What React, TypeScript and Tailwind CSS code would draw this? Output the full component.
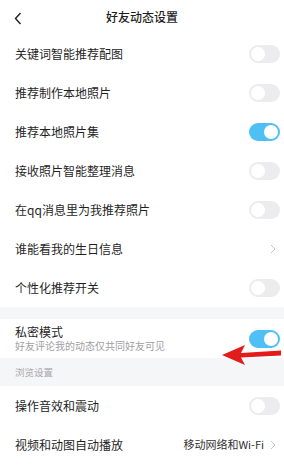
import React from "react";

const font = { fontFamily: '"Noto Sans CJK SC", "Noto Sans", sans-serif' };

function Toggle({ on }: { on?: boolean }) {
  return (
    <div
      className={`w-[31px] h-[18px] rounded-full flex items-center px-[2px] ${
        on ? "bg-[#4fc0f6] justify-end" : "bg-[#ececef] justify-start"
      }`}
    >
      <div className="w-[14px] h-[14px] rounded-full bg-white" />
    </div>
  );
}

function Chevron() {
  return (
    <svg width="6" height="10" viewBox="0 0 6 10" className="ml-[6px]">
      <path d="M1 1 L5 5 L1 9" fill="none" stroke="#c4c4c8" strokeWidth="1" />
    </svg>
  );
}

function Row({ label, on, chevron, value }: { label: string; on?: boolean; chevron?: boolean; value?: string }) {
  return (
    <div className="h-[39px] flex items-center justify-between pl-[15px] pr-[4px] bg-white">
      <span className="text-[12px] text-[#1f1f1f]">{label}</span>
      {chevron ? (
        <div className="flex items-center pr-[4px]">
          {value && <span className="text-[11px] text-[#333]">{value}</span>}
          <Chevron />
        </div>
      ) : (
        <Toggle on={on} />
      )}
    </div>
  );
}

export default function App() {
  return (
    <div className="w-[284px] h-[471px] bg-white relative overflow-hidden" style={font}>
      <div className="h-[34px] flex items-center justify-center relative">
        <svg width="8" height="13" viewBox="0 0 8 13" className="absolute left-[14px] top-[12px]">
          <path d="M6.5 1 L1.5 6.5 L6.5 12" fill="none" stroke="#222" strokeWidth="1.4" />
        </svg>
        <span className="text-[12px] font-medium text-[#1f1f1f]">好友动态设置</span>
      </div>
      <Row label="关键词智能推荐配图" />
      <Row label="推荐制作本地照片" />
      <Row label="推荐本地照片集" on />
      <Row label="接收照片智能整理消息" />
      <Row label="在qq消息里为我推荐照片" />
      <Row label="谁能看我的生日信息" chevron />
      <Row label="个性化推荐开关" />
      <div className="h-[12px] bg-[#f5f6f8]" />
      <div className="h-[39px] flex items-center justify-between pl-[15px] pr-[4px]">
        <div className="flex flex-col">
          <span className="text-[12px] text-[#1f1f1f] leading-[14px]">私密模式</span>
          <span className="text-[10px] text-[#a0a0a4] leading-[12px] mt-[1px]">好友评论我的动态仅共同好友可见</span>
        </div>
        <Toggle on />
      </div>
      <div className="h-[28px] bg-[#f5f6f8] flex items-center pl-[15px]">
        <span className="text-[9.5px] text-[#a8a8ac]">浏览设置</span>
      </div>
      <Row label="操作音效和震动" />
      <Row label="视频和动图自动播放" chevron value="移动网络和Wi-Fi" />
      <svg width="64" height="24" viewBox="0 0 64 24" className="absolute left-[220px] top-[343px]">
        <path d="M2 12 L25 2 L21 10 L61 7.5 L61 12.5 L21 14.5 L25 22 Z" fill="#e21b1b" />
      </svg>
    </div>
  );
}
